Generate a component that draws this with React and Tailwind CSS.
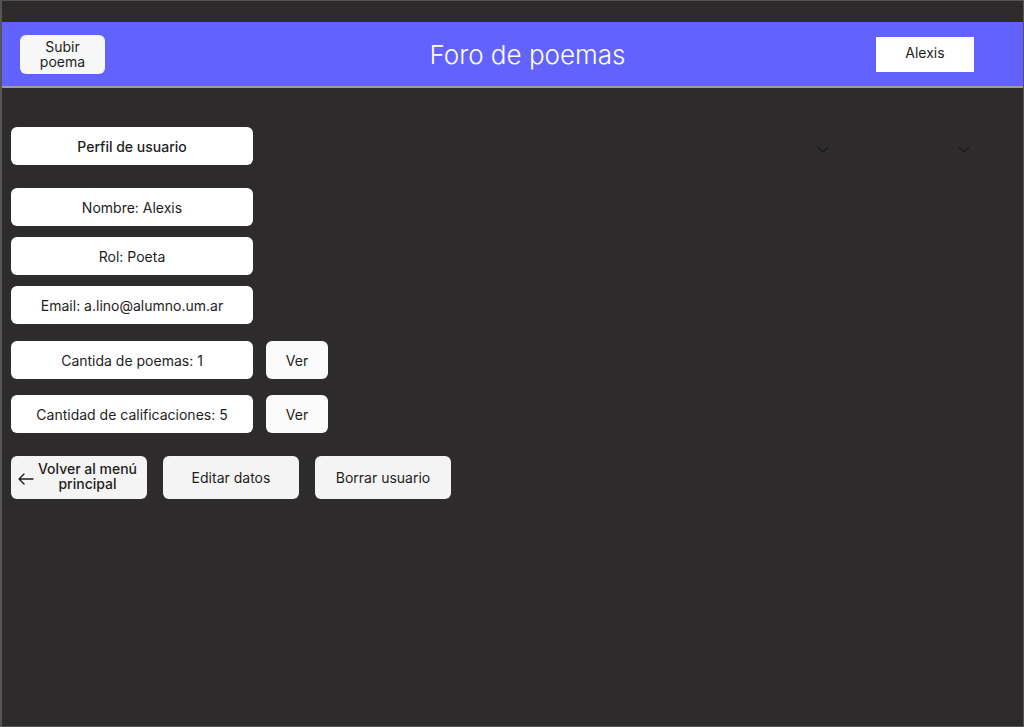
import React from 'react';

const Chevron = () => (
  <svg width="12" height="8" viewBox="0 0 12 8" fill="none" stroke="#1c1b21" strokeWidth="1.6" strokeLinecap="round" strokeLinejoin="round">
    <path d="M1.5 2l4.5 4 4.5-4" />
  </svg>
);

const InfoCard = ({ children, bold }) => (
  <div className={`w-[242px] h-[38px] bg-white rounded-md flex items-center justify-center text-[14px] text-[#1e1e1e] ${bold ? 'font-medium' : ''}`}>
    {children}
  </div>
);

const VerButton = () => (
  <button className="w-[62px] h-[38px] bg-[#fbfbfb] rounded-md text-[14px] text-[#1e1e1e] flex items-center justify-center">
    Ver
  </button>
);

const ActionButton = ({ children }) => (
  <button className="w-[136px] h-[43px] bg-[#f4f4f4] rounded-md text-[14px] text-[#1e1e1e] flex items-center justify-center leading-[15px]">
    {children}
  </button>
);

export default function App() {
  return (
    <div
      className="w-[1024px] h-[727px] bg-[#2d2b2c] border border-l-2 border-[#555555] flex flex-col overflow-hidden"
      style={{ fontFamily: 'Inter, "Noto Sans", sans-serif' }}
    >
      <div className="h-[21px] shrink-0" />
      <header className="h-[66px] shrink-0 bg-[#6262fe] border-b-2 border-[#9a9aa8] flex items-center justify-between pl-[18px] pr-[49px]">
        <button className="w-[85px] h-[39px] bg-[#f7f7f7] rounded-md text-[14px] leading-[15px] text-[#1e1e1e] flex items-center justify-center text-center">
          Subir
          <br />
          poema
        </button>
        <h1 className="text-white text-[26px] font-light ml-[74px]">Foro de poemas</h1>
        <button className="w-[98px] h-[35px] bg-white text-[14px] text-[#1e1e1e] flex items-center justify-center pb-1">
          Alexis
        </button>
      </header>

      <main className="flex-1 pl-[9px] pt-[39px] relative">
        <div className="absolute top-[58px] left-[815px]"><Chevron /></div>
        <div className="absolute top-[58px] left-[956px]"><Chevron /></div>

        <InfoCard bold>Perfil de usuario</InfoCard>

        <div className="flex flex-col gap-[11px] mt-[23px]">
          <InfoCard>Nombre: Alexis</InfoCard>
          <InfoCard>Rol: Poeta</InfoCard>
          <InfoCard>Email: a.lino@alumno.um.ar</InfoCard>
        </div>

        <div className="flex flex-col gap-[16px] mt-[17px]">
          <div className="flex items-center gap-[13px]">
            <InfoCard>Cantida de poemas: 1</InfoCard>
            <VerButton />
          </div>
          <div className="flex items-center gap-[13px]">
            <InfoCard>Cantidad de calificaciones: 5</InfoCard>
            <VerButton />
          </div>
        </div>

        <div className="flex gap-[16px] mt-[23px]">
          <ActionButton>
            <span className="flex items-center gap-[3px] -ml-[4px]">
              <svg width="18" height="12" viewBox="0 0 18 12" fill="none" stroke="#1e1e1e" strokeWidth="1.4" strokeLinecap="round" strokeLinejoin="round" className="mt-[3px]">
                <path d="M16 6H2M7 1L2 6l5 5" />
              </svg>
              <span className="text-center font-medium pb-1">
                Volver al menú
                <br />
                principal
              </span>
            </span>
          </ActionButton>
          <ActionButton>Editar datos</ActionButton>
          <ActionButton>Borrar usuario</ActionButton>
        </div>
      </main>
    </div>
  );
}
